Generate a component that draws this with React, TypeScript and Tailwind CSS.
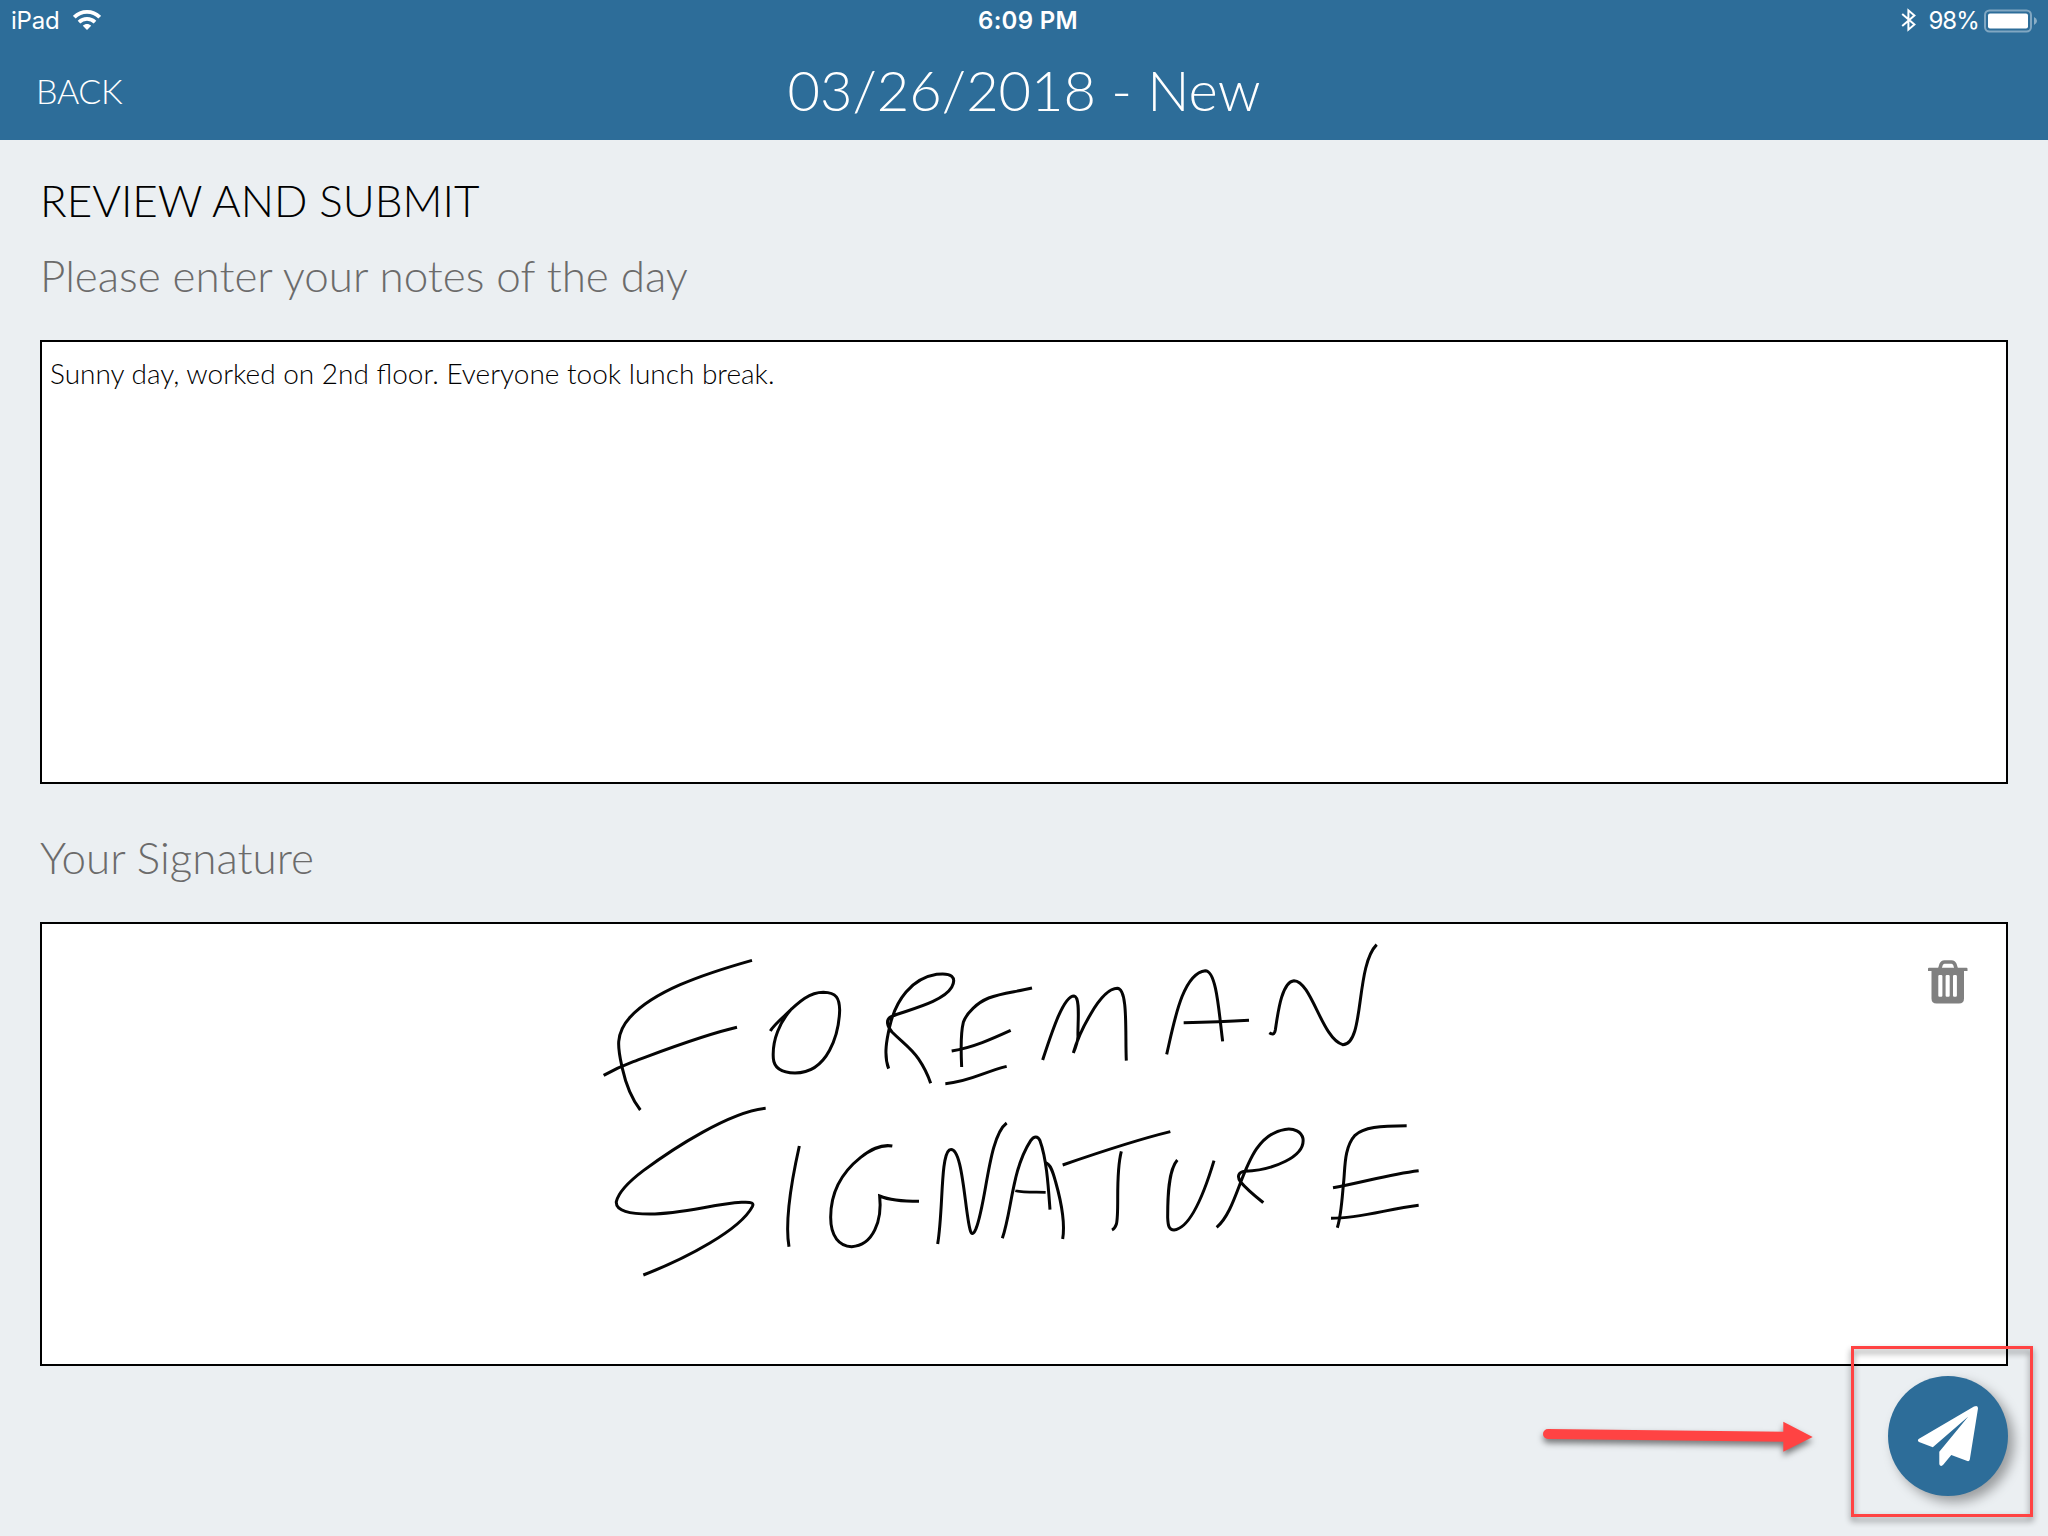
import React from "react";

function StatusBar() {
  return (
    <div className="grid h-[42px] grid-cols-3 items-center font-['Inter',sans-serif] text-2xl font-normal leading-[42px]">
      <div className="flex items-center pl-[11px]">
        <span className="w-[49px] tracking-[-0.2px]">iPad</span>
        <svg className="mb-0.5 ml-[13px] h-5 w-7" viewBox="0 0 28 20" fill="none" stroke="white">
          <path d="M1.3 7.2C8.3 .2 19.7 .2 26.7 7.2" strokeWidth="3.8" />
          <path d="M6 12.1C10.5 7.8 17.5 7.8 22 12.1" strokeWidth="3.7" />
          <path d="M9.8 15.8C12.2 13.5 15.8 13.5 18.2 15.8L14 20Z" fill="white" stroke="none" />
        </svg>
      </div>
      <div className="pl-2 text-center font-semibold tracking-[0.3px]">6:09 PM</div>
      <div className="flex items-center justify-end pr-[11px]">
        <svg className="mb-0.5 mr-[11px] h-6 w-4" viewBox="0 0 16 24" fill="none" stroke="white" strokeWidth="2">
          <path d="M1.2 6L13.4 16.6L7.4 21.7V2.3L13.4 7.4L1.2 18" />
        </svg>
        <span className="tracking-[-0.9px]">98%</span>
        <svg className="mb-px ml-[5px] h-6 w-[53px]" viewBox="0 0 53 24">
          <rect x="1" y="1.5" width="46" height="21" rx="4.5" fill="none" stroke="white" strokeOpacity=".4" strokeWidth="2" />
          <rect x="4" y="4.5" width="40" height="15" rx="2" fill="white" />
          <path d="M50 8Q53 9.5 53 12T50 16Z" fill="white" fillOpacity=".45" />
        </svg>
      </div>
    </div>
  );
}

function Signature() {
  return (
    <svg className="block h-full w-full" viewBox="42 924 1964 440" fill="none" stroke="#050505" strokeWidth="9">
      <g transform="translate(590 930) scale(.333333)">
        <path d="M486 91C330 135 190 185 120 262C72 315 85 360 97 415C108 465 124 505 151 540" />
        <path d="M41 436C75 417 90 410 130 395C225 360 340 315 441 292" />
        <path d="M541 303C550 288 570 270 585 256C630 212 660 187 700 187C740 188 748 205 749 240C747 310 715 429 615 429C575 428 552 415 550 385C546 330 570 275 605 236" />
        <path d="M896 416C880 375 891 325 899 290C917 210 965 145 1040 133C1085 127 1101 142 1085 172C1060 215 960 238 905 259C884 269 893 290 906 306C940 340 962 353 985 386C1000 408 1012 430 1022 460" />
        <path d="M1115 411C1112 350 1113 305 1120 277C1130 248 1162 218 1196 204C1235 189 1270 187 1326 174" />
        <path d="M1085 363C1150 352 1205 327 1262 301" />
        <path d="M1066 461C1140 455 1180 426 1250 409" />
        <path d="M527 535C420 545 250 655 160 722C115 756 85 790 79 815C76 843 120 852 180 852C280 851 370 822 455 817C488 815 492 820 487 830C450 900 290 985 160 1035" />
        <path d="M628 648C604 755 584 875 597 950" />
        <path d="M907 648C870 642 840 660 812 682C758 725 722 785 722 862C722 920 748 949 785 950C850 947 877 870 869 798C900 811 940 814 987 814" />
        <path d="M1043 942C1060 840 1051 680 1078 660C1118 640 1124 840 1140 898C1144 915 1150 915 1158 896C1190 815 1195 620 1250 579" />
        <path d="M1237 925C1266 840 1265 720 1322 632C1332 617 1344 617 1350 632C1370 687 1375 770 1380 839" />
        <path d="M1276 782C1295 787 1325 786 1367 787" strokeWidth="8" />
        <path d="M1366 698C1382 700 1390 730 1397 756C1417 827 1425 885 1418 927" />
      </g>
      <g transform="translate(1010 930) scale(.333333)">
        <path d="M98 390C125 308 160 198 192 198C213 201 202 285 204 320C203 336 198 350 190 369C205 315 270 175 322 175C355 176 345 310 349 392" />
        <path d="M470 373C490 290 515 130 586 122C620 122 627 250 638 334" />
        <path d="M521 278C580 277 650 275 717 271" />
        <path d="M778 308C788 315 793 314 796 300C803 255 814 155 852 152C905 154 935 325 998 344C1065 345 1035 110 1100 44" />
        <path d="M158 705C265 668 370 632 481 605" />
        <path d="M334 664C315 735 329 845 319 883C315 895 312 897 306 900" />
        <path d="M502 690C475 720 473 800 473 862C474 890 478 900 492 900C545 895 587 775 612 692" />
        <path d="M620 892C675 845 690 728 740 656C790 585 870 583 879 626C886 680 790 720 705 724C685 726 680 740 692 756C712 780 735 798 760 818" />
        <path d="M1190 587C1110 587 1060 592 1035 616C1000 655 1006 720 1000 765C996 810 993 860 982 893" />
        <path d="M969 773C1060 757 1135 733 1226 722" />
        <path d="M963 865C1055 865 1135 836 1226 826" />
      </g>
    </svg>
  );
}

function TrashIcon() {
  return (
    <svg className="h-11 w-10" viewBox="0 0 40 44">
      <path d="M11.7 9L13 4.7Q14 2 16.5 2H23.5Q26 2 27 4.7L28.3 9" fill="none" stroke="#808080" strokeWidth="3.6" />
      <path
        fill="#808080"
        fillRule="evenodd"
        d="M1 7.7H38.5Q39.5 7.7 39.5 8.7V10.9H36V38.5Q36 43.5 31 43.5H8.5Q3.5 43.5 3.5 38.5V10.9H0V8.7Q0 7.7 1 7.7ZM11.5 15Q10.3 15 10.3 16.2V35.5Q10.3 36.7 11.5 36.7H13.2Q14.4 36.7 14.4 35.5V16.2Q14.4 15 13.2 15ZM18.8 15Q17.6 15 17.6 16.2V35.5Q17.6 36.7 18.8 36.7H20.5Q21.7 36.7 21.7 35.5V16.2Q21.7 15 20.5 15ZM26.2 15Q25 15 25 16.2V35.5Q25 36.7 26.2 36.7H27.7Q28.9 36.7 28.9 35.5V16.2Q28.9 15 27.7 15Z"
      />
    </svg>
  );
}

export default function App() {
  return (
    <div className="relative flex h-[1536px] w-[2048px] flex-col overflow-hidden bg-[#ebeff2] font-['Lato',sans-serif] font-light">
      <header className="h-[140px] bg-[#2d6d99] text-white">
        <StatusBar />
        <div className="grid grid-cols-[1fr_auto_1fr] items-start pt-4">
          <button className="pl-9 pt-0.5 text-left text-[34px] leading-[62px] tracking-[-0.3px]">BACK</button>
          <h1 className="text-[56px] leading-[64px]">03/26/2018 - New</h1>
          <span />
        </div>
      </header>

      <main className="flex flex-col px-10 pt-8">
        <h2 className="text-[44px] leading-[56px] tracking-[-0.04px] text-black">REVIEW AND SUBMIT</h2>
        <p className="mt-[19px] text-[44px] leading-[56px] tracking-[-0.02px] text-[#6b6b6b]">Please enter your notes of the day</p>
        <div className="mt-[37px] h-[444px] border-2 border-black bg-white pl-2 pt-[13px] text-[28px] leading-9 text-black">
          Sunny day, worked on 2nd floor. Everyone took lunch break.
        </div>
        <p className="mt-[45px] text-[44px] leading-[56px] text-[#6b6b6b]">Your Signature</p>
        <div className="relative mt-[37px] h-[444px] border-2 border-black bg-white">
          <Signature />
          <button className="absolute right-[38px] top-9" aria-label="Clear signature">
            <TrashIcon />
          </button>
        </div>
      </main>

      <button
        className="absolute left-[1888px] top-[1376px] h-[120px] w-[120px] rounded-full bg-[#2d6d99] shadow-[6px_6px_12px_rgba(0,0,0,0.35)]"
        aria-label="Submit"
      >
        <svg className="h-full w-full" viewBox="0 0 120 120" fill="white">
          <path d="M86 30.5Q90.3 28.8 90 32.5L81.8 83.5Q81.4 85.6 79.3 85.1L63.3 79L55.2 88.8Q54 90.3 52.5 89.8Q51.3 89.3 51.3 87.8V75.8L80.3 40.5L44.8 71.2L31 66Q28.8 64.3 31 62.7Z" />
        </svg>
      </button>

      <svg className="absolute left-[1530px] top-[1400px] h-20 w-[310px] drop-shadow-[0_4px_3px_rgba(0,0,0,0.5)]" viewBox="0 0 310 80">
        <path d="M18 29L253.3 31.8V21.7L282.7 37L253.3 51.7V41.8L18 39A5 5 0 0 1 18 29Z" fill="#ff4343" />
      </svg>
      <div className="pointer-events-none absolute left-[1851px] top-[1346px] h-[171px] w-[182px] border-3 border-[#ff4343] drop-shadow-[0_4px_3px_rgba(0,0,0,0.45)]" />
    </div>
  );
}
